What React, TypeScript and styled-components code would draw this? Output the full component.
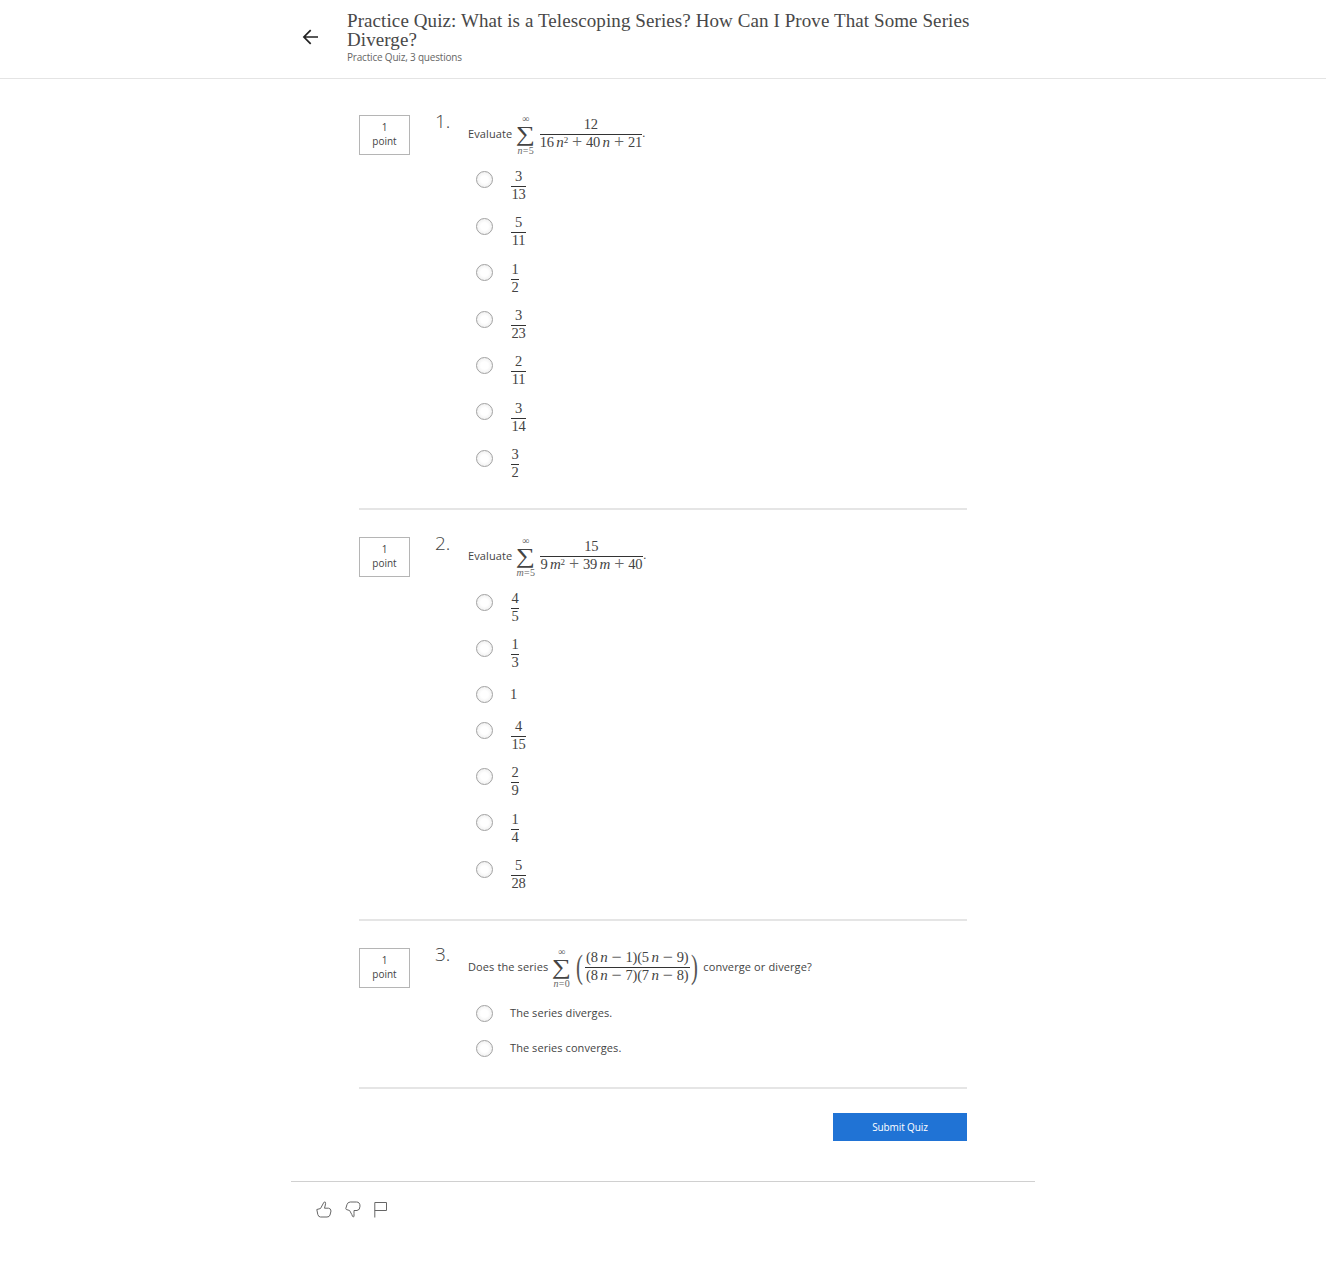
import React from "react";
import styled, { createGlobalStyle } from "styled-components";

const sans = `"Open Sans", "Noto Sans", sans-serif`;
const serif = `"Liberation Serif", serif`;

const GlobalStyle = createGlobalStyle`
  *, *::before, *::after { box-sizing: border-box; }
  body { margin: 0; background: #fff; color: #444; font-family: ${sans}; font-size: 11px; }
`;

const Page = styled.div`
  min-height: 1283px;
  background: #fff;
`;

const Header = styled.header`
  height: 79px;
  border-bottom: 1px solid #e4e4e4;
`;

const HeaderInner = styled.div`
  width: 744px;
  margin: 0 auto;
  padding: 11px 0 0 11px;
  display: flex;
  gap: 28px;
`;

const BackButton = styled.button`
  width: 17px;
  height: 16px;
  margin-top: 18px;
  padding: 0;
  border: 0;
  background: none;
  flex: none;
`;

const Heading = styled.div`
  flex: none;
  width: 660px;
`;

const Title = styled.h1`
  margin: 0;
  font: 400 19px/19px ${serif};
  letter-spacing: 0.09px;
  color: #484848;
`;

const Subtitle = styled.div`
  margin-top: 1px;
  font-size: 10px;
  line-height: 14px;
  letter-spacing: -0.19px;
  color: #666;
`;

const Quiz = styled.main`
  width: 608px;
  margin: 0 auto;
`;

const Question = styled.section<{ $first?: boolean }>`
  display: grid;
  grid-template-columns: 51px 58px 1fr;
  padding: ${(p) => (p.$first ? 36 : 27)}px 0 14.6px;
  border-bottom: 2px solid #e5e5e5;
`;

const Points = styled.div`
  height: 40px;
  border: 1px solid #b5b5b5;
  padding-top: 4.2px;
  text-align: center;
  font-size: 10px;
  line-height: 14px;
`;

const QuestionNumber = styled.div`
  padding-left: 25px;
  font-size: 19px;
  font-weight: 300;
  line-height: 12px;
  white-space: nowrap;
`;

const Prompt = styled.div`
  height: 39px;
  display: flex;
  align-items: center;
  white-space: nowrap;
  letter-spacing: 0.11px;
`;

const PromptText = styled.span`
  padding-bottom: 2px;
`;

const Options = styled.ul`
  list-style: none;
  margin: 14.8px 0 0;
  padding: 0 0 0 8px;
`;

const Option = styled.li<{ $plain: boolean }>`
  height: ${(p) => (p.$plain ? 35.3 : 46.4)}px;
  display: flex;
  align-items: flex-start;
`;

const Radio = styled.input`
  appearance: none;
  width: 17px;
  height: 17px;
  margin: 2.6px 17px 0 0;
  border: 1px solid #a2a2a2;
  border-radius: 50%;
  background: radial-gradient(circle at 50% 50%, #fff 35%, #f0f0f0 75%);
  flex: none;
`;

const OptionText = styled.span<{ $math?: boolean }>`
  font-family: ${(p) => (p.$math ? serif : sans)};
  font-size: ${(p) => (p.$math ? 14.5 : 11)}px;
  line-height: ${(p) => (p.$math ? 21 : 22)}px;
  letter-spacing: 0.07px;
  color: #444;
`;

const Fraction = styled.span<{ $width: number; $gap?: number }>`
  display: inline-flex;
  flex-direction: column;
  align-items: center;
  width: ${(p) => p.$width}px;
  flex: none;
  margin: 0 ${(p) => p.$gap ?? 1}px;
  font: 14.5px/16px ${serif};
  letter-spacing: -0.2px;
  color: #444;
`;

const Numerator = styled.span`
  height: 18px;
  width: 100%;
  border-bottom: 1px solid #333;
  display: flex;
  justify-content: center;
  line-height: 14px;
`;

const Denominator = styled.span`
  height: 18px;
  display: flex;
  line-height: 15px;
`;

const Variable = styled.i`
  margin-left: 2.5px;
  font-size: 15px;
`;

const Square = styled.span`
  font-size: 9px;
  line-height: 11px;
`;

const Operator = styled.span`
  width: 18px;
  text-align: center;
  font-size: 18px;
  color: #666;
`;

const Sum = styled.span`
  display: flex;
  flex-direction: column;
  align-items: center;
  width: 20px;
  flex: none;
  margin: 0 3.5px;
  font-family: ${serif};
  font-size: 10px;
  line-height: 9px;
  letter-spacing: 0.3px;
  color: #666;
`;

const UpperLimit = styled.span`
  height: 9px;
  line-height: 7px;
`;

const Sigma = styled.span`
  height: 22px;
  font-size: 21px;
  line-height: 20px;
  color: #444;
  transform: scaleX(1.28);
`;

const Paren = styled.span`
  width: 9px;
  text-align: center;
  font: 18px/34px ${serif};
  transform: translateY(-1px) scale(1.15, 1.85);
  color: #555;
`;

const Period = styled.span`
  padding-bottom: 3px;
  font: 12px/12px ${serif};
`;

const Actions = styled.div`
  display: flex;
  justify-content: flex-end;
  padding: 23.8px 0 40px;
`;

const Submit = styled.button`
  width: 134px;
  height: 28px;
  border: 0;
  padding: 0;
  background: #2073d5;
  color: #fff;
  font: 500 10px ${sans};
  letter-spacing: -0.1px;
`;

const Footer = styled.footer`
  width: 744px;
  margin: 0 auto;
  padding: 18px 0 0 25px;
  border-top: 1px solid #d0d0d0;
  display: flex;
  gap: 12px;
`;

const FeedbackIcon = styled.svg`
  width: 17px;
  height: 19px;
  fill: none;
  stroke: #666;
  stroke-width: 1;
`;

type FracValue = [string, string];
const isFraction = (v: string | FracValue): v is FracValue => Array.isArray(v);

const SmallFraction = ({ value }: { value: FracValue }) => (
  <Fraction $width={value[1].length > 1 ? 15 : 8}>
    <Numerator>{value[0]}</Numerator>
    <Denominator>{value[1]}</Denominator>
  </Fraction>
);

const Series = ({ variable, start }: { variable: string; start: number }) => (
  <Sum>
    <UpperLimit>∞</UpperLimit>
    <Sigma>∑</Sigma>
    <span><i>{variable}</i>={start}</span>
  </Sum>
);

const Quadratic = ({ a, b, c, v }: { a: number; b: number; c: number; v: string }) => (
  <Denominator>
    {a}<Variable>{v}</Variable><Square>2</Square>
    <Operator>+</Operator>{b}<Variable>{v}</Variable>
    <Operator>+</Operator>{c}
  </Denominator>
);

const Product = ({ p, q, r, s }: { p: number; q: number; r: number; s: number }) => (
  <>
    ({p}<Variable>n</Variable><Operator>−</Operator>{q})({r}<Variable>n</Variable>
    <Operator>−</Operator>{s})
  </>
);

const questions: { prompt: React.ReactNode; options: (string | FracValue)[] }[] = [
  {
    prompt: (
      <>
        <PromptText>Evaluate</PromptText>
        <Series variable="n" start={5} />
        <Fraction $width={102} $gap={0.5}>
          <Numerator>12</Numerator>
          <Quadratic a={16} b={40} c={21} v="n" />
        </Fraction>
        <Period>.</Period>
      </>
    ),
    options: [["3", "13"], ["5", "11"], ["1", "2"], ["3", "23"], ["2", "11"], ["3", "14"], ["3", "2"]],
  },
  {
    prompt: (
      <>
        <PromptText>Evaluate</PromptText>
        <Series variable="m" start={5} />
        <Fraction $width={103} $gap={0.5}>
          <Numerator>15</Numerator>
          <Quadratic a={9} b={39} c={40} v="m" />
        </Fraction>
        <Period>.</Period>
      </>
    ),
    options: [["4", "5"], ["1", "3"], "1", ["4", "15"], ["2", "9"], ["1", "4"], ["5", "28"]],
  },
  {
    prompt: (
      <>
        <PromptText>Does the series</PromptText>
        <Series variable="n" start={0} />
        <Paren>(</Paren>
        <Fraction $width={105} $gap={0.4}>
          <Numerator><Product p={8} q={1} r={5} s={9} /></Numerator>
          <Denominator><Product p={8} q={7} r={7} s={8} /></Denominator>
        </Fraction>
        <Paren>)</Paren>
        <PromptText>&nbsp;&#8202;converge or diverge?</PromptText>
      </>
    ),
    options: ["The series diverges.", "The series converges."],
  },
];

export default function App() {
  return (
    <Page>
      <GlobalStyle />
      <Header>
        <HeaderInner>
          <BackButton aria-label="Back">
            <svg width="17" height="16" viewBox="0 0 17 16" fill="none" stroke="#222" strokeWidth="1.7">
              <path d="M16 8H2.2M8.7 1.2L1.9 8l6.8 6.8" />
            </svg>
          </BackButton>
          <Heading>
            <Title>
              Practice Quiz: What is a Telescoping Series? How Can I Prove That Some Series
              <br />
              Diverge?
            </Title>
            <Subtitle>Practice Quiz, 3 questions</Subtitle>
          </Heading>
        </HeaderInner>
      </Header>
      <Quiz>
        {questions.map((q, i) => (
          <Question key={i} $first={i === 0}>
            <Points>1<br />point</Points>
            <QuestionNumber>{i + 1}.</QuestionNumber>
            <div>
              <Prompt>{q.prompt}</Prompt>
              <Options>
                {q.options.map((o, j) => (
                  <Option key={j} $plain={!isFraction(o)}>
                    <Radio type="radio" name={`q${i}`} />
                    {isFraction(o) ? <SmallFraction value={o} /> : <OptionText $math={o.length < 3}>{o}</OptionText>}
                  </Option>
                ))}
              </Options>
            </div>
          </Question>
        ))}
        <Actions>
          <Submit>Submit Quiz</Submit>
        </Actions>
      </Quiz>
      <Footer>
        <FeedbackIcon viewBox="0 0 17 19">
          <path d="M.8 9.5L4.5 8.5 7.5 3Q8.5 1.2 9.3 2.2 9.9 3 9.3 5L8.5 8.2H12.5Q15 8.5 15 11L14 15Q13.5 17 11 17H4.5Q2.5 17 1.8 14.5Z" />
        </FeedbackIcon>
        <FeedbackIcon viewBox="0 0 17 19">
          <path d="M.8 8.5L2 4.5Q2.8 2 5.3 2H11.5Q15 2 15 6.2 15 10.2 12 10.5L9 10.5V13.5Q9.3 17 8.4 17 7.4 17 6.8 14.5L4.6 10.5 1.3 9.5Z" />
        </FeedbackIcon>
        <FeedbackIcon viewBox="0 0 17 19">
          <path d="M.8 17.5V2.5H12.5V10.5H.8" />
        </FeedbackIcon>
      </Footer>
    </Page>
  );
}
